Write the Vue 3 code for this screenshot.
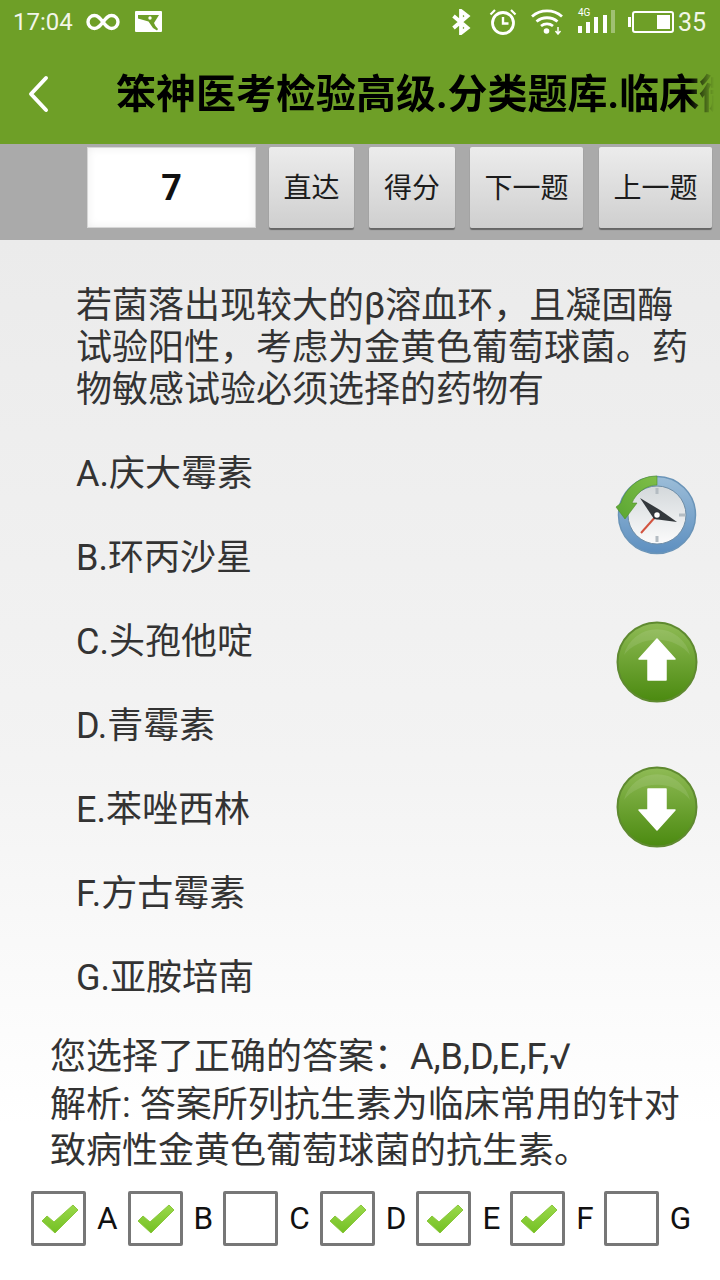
<template>
  <div class="page">
    <div class="status">
      <span class="time">17:04</span>
      <svg class="ic-loop" width="34" height="18" viewBox="0 0 34 18">
        <path d="M17 9c-3-4-5-6.500-8.500-6.500a6.500 6.500 0 0 0 0 13C12 15.500 14 13 17 9c3-4 5-6.500 8.500-6.500a6.500 6.500 0 0 1 0 13C22 15.500 20 13 17 9z" fill="none" stroke="#fff" stroke-width="3.400" />
      </svg>
      <svg class="ic-pic" width="28" height="22" viewBox="0 0 28 22">
        <rect width="27" height="21" rx="1" fill="#fff" />
        <path d="M3 4h21l-5 8 1.500 3 2.500 3-1 1.500-4-2.500-4.500-6.500L3 7.500z" fill="#6e9f27" />
        <circle cx="15" cy="7" r="1.700" fill="#fff" />
      </svg>
      <span class="grow"></span>
      <svg width="20" height="26" viewBox="0 0 20 26" class="ic-bt">
        <path d="M2.500 7l14 12-6.500 5V2l6.500 5-14 12" fill="none" stroke="#fff" stroke-width="3.800" />
      </svg>
      <svg width="28" height="28" viewBox="0 0 28 28" class="ic-alarm">
        <circle cx="14" cy="15" r="10.500" fill="none" stroke="#fff" stroke-width="2.800" />
        <path d="M14 9v6.500h5.500" fill="none" stroke="#fff" stroke-width="2.400" />
        <path d="M1.500 6.500L6 2M26.500 6.500L22 2" stroke="#fff" stroke-width="2.200" />
      </svg>
      <svg width="32" height="26" viewBox="0 0 32 26" class="ic-wifi">
        <path d="M1 7.500c8.500-7.500 21.500-7.500 30 0M5.500 12.500c6-5 15-5 21 0M10 17c3.500-2.800 8.500-2.800 12 0" fill="none" stroke="#fff" stroke-width="2.800" />
        <circle cx="15.500" cy="22" r="2.800" fill="#fff" />
        <path d="M27 18v6M24.500 22l2.500 3 2.500-3" fill="none" stroke="#fff" stroke-width="1.500" />
      </svg>
      <div class="signal">
        <span class="tag">4G</span>
        <svg width="37" height="24" viewBox="0 0 37 24">
          <rect x="0" y="16" width="4" height="7" fill="#fff" />
          <rect x="8" y="12" width="4" height="11" fill="#fff" />
          <rect x="16" y="7" width="4" height="16" fill="#fff" />
          <rect x="25" y="5" width="4" height="18" fill="#fff" />
          <rect x="33" y="0" width="4" height="23" fill="#fff" opacity=".35" />
        </svg>
      </div>
      <div class="battery">
        <span class="nub"></span>
        <span class="cell"><span class="lvl"></span></span>
      </div>
      <span class="pct">35</span>
    </div>

    <header class="head">
      <svg class="back" width="22" height="38" viewBox="0 0 22 38">
        <path d="M19 3L4 19l15 16" fill="none" stroke="#fff" stroke-width="4" stroke-linecap="round" stroke-linejoin="round" />
      </svg>
      <div class="title">笨神医考检验高级.分类题库.临床微生物</div>
    </header>

    <div class="tools">
      <div class="input">7</div>
      <div class="btn b1">直达</div>
      <div class="btn b2">得分</div>
      <div class="btn b3">下一题</div>
      <div class="btn b4">上一题</div>
    </div>

    <main class="body">
      <p class="question">若菌落出现较大的β溶血环，且凝固酶试验阳性，考虑为金黄色葡萄球菌。药物敏感试验必须选择的药物有</p>
      <ul class="options">
        <li v-for="o in options" :key="o">{{ o }}</li>
      </ul>
      <div class="answer">
        <p class="picked">您选择了正确的答案：A,B,D,E,F,√</p>
        <p>解析: 答案所列抗生素为临床常用的针对致病性金黄色葡萄球菌的抗生素。</p>
      </div>
      <div class="checks">
        <div v-for="c in checks" :key="c.k" class="check">
          <span class="box">
            <svg v-if="c.on" width="40" height="32" viewBox="0 0 40 32">
              <defs>
                <linearGradient :id="'tick' + c.k" x1="0" y1="0" x2="0" y2="1">
                  <stop offset="0" stop-color="#9ad94a" />
                  <stop offset="1" stop-color="#74c024" />
                </linearGradient>
              </defs>
              <path d="M2 18l5-5 7 6L33 2l5 5-23 23z" :fill="'url(#tick' + c.k + ')'" stroke="#8ac73c" stroke-width="1" stroke-linejoin="round" />
            </svg>
          </span>
          <span class="letter">{{ c.k }}</span>
        </div>
      </div>

      <svg class="float clock" width="84" height="84" viewBox="0 0 84 84">
        <defs>
          <linearGradient id="ring" x1="0" y1="0" x2="0" y2="1">
            <stop offset="0" stop-color="#9cbdd8" />
            <stop offset="1" stop-color="#5d8fc0" />
          </linearGradient>
          <linearGradient id="face" x1="0" y1="0" x2="0" y2="1">
            <stop offset="0" stop-color="#d3d8db" />
            <stop offset="1" stop-color="#fbfbfb" />
          </linearGradient>
          <linearGradient id="swoosh" x1="0" y1="1" x2="1" y2="0">
            <stop offset="0" stop-color="#5aa632" />
            <stop offset="1" stop-color="#7fbe48" />
          </linearGradient>
        </defs>
        <circle cx="42" cy="42" r="38.500" fill="url(#ring)" stroke="#6a94b8" stroke-width="1.500" />
        <circle cx="42" cy="42" r="29" fill="url(#face)" stroke="#6e8da6" stroke-width="1" />
        <path d="M42 15v6M42 63v6M64 42h6" stroke="#b4bcc2" stroke-width="3" />
        <path d="M42 42L26 60" stroke="#d2533f" stroke-width="2" />
        <path d="M25 25L45 37L62 49L39 46z" fill="#33383c" />
        <circle cx="42" cy="42" r="3.500" fill="#fff" stroke="#30343a" stroke-width="1.500" />
        <path d="M42 3C25 3 11 14 6 30L1 34L10 46L22 30L17 30C21 20 31 12 42 12z" fill="url(#swoosh)" stroke="#4f8f2a" stroke-width=".6" />
      </svg>
      <svg class="float up" width="82" height="82" viewBox="0 0 82 82">
        <defs>
          <linearGradient id="g1" x1="0" y1="0" x2="0" y2="1">
            <stop offset="0" stop-color="#8fbb55" />
            <stop offset="1" stop-color="#4b8a10" />
          </linearGradient>
        </defs>
        <circle cx="41" cy="41" r="39.500" fill="url(#g1)" stroke="#5f8a30" stroke-width="2" />
        <path d="M8 34a34 34 0 0 1 66 0a38 30 0 0 0-66 0z" fill="#fff" opacity=".1" />
        <path d="M41 18L59 38H50V59H32V38H23z" fill="#fff" stroke="#fff" stroke-width="1.500" stroke-linejoin="round" />
      </svg>
      <svg class="float down" width="82" height="82" viewBox="0 0 82 82">
        <circle cx="41" cy="41" r="39.500" fill="url(#g1)" stroke="#5f8a30" stroke-width="2" />
        <path d="M8 34a34 34 0 0 1 66 0a38 30 0 0 0-66 0z" fill="#fff" opacity=".1" />
        <path d="M41 64L59 44H50V23H32V44H23z" fill="#fff" stroke="#fff" stroke-width="1.500" stroke-linejoin="round" />
      </svg>
    </main>
  </div>
</template>

<script setup>
const options = [
  'A.庆大霉素',
  'B.环丙沙星',
  'C.头孢他啶',
  'D.青霉素',
  'E.苯唑西林',
  'F.方古霉素',
  'G.亚胺培南',
]

const checks = [
  { k: 'A', on: true },
  { k: 'B', on: true },
  { k: 'C', on: false },
  { k: 'D', on: true },
  { k: 'E', on: true },
  { k: 'F', on: true },
  { k: 'G', on: false },
]
</script>

<style>
html,
body {
  margin: 0;
  background: #fff;
}
</style>

<style scoped>
.page {
  width: 720px;
  height: 1280px;
  overflow: hidden;
  display: flex;
  flex-direction: column;
  font-family: Roboto, 'Noto Sans CJK SC', sans-serif;
  color: #333;
}
.status {
  height: 44px;
  background: #6e9f27;
  display: flex;
  align-items: center;
  padding: 0 14px 0 13px;
  color: #f2f6e8;
}
.time {
  font-size: 24px;
  width: 59px;
}
.ic-loop {
  margin-left: 14px;
}
.ic-pic {
  margin-left: 15px;
}
.grow {
  flex: 1;
}
.ic-bt {
  margin-right: 18px;
}
.ic-alarm {
  margin-right: 14px;
}
.ic-wifi {
  margin-right: 15px;
}
.signal {
  position: relative;
  width: 37px;
  height: 24px;
  margin-right: 13px;
}
.signal svg {
  display: block;
}
.tag {
  position: absolute;
  left: 0;
  top: -3px;
  font-size: 10px;
  line-height: 12px;
  color: #fff;
}
.battery {
  display: flex;
  align-items: center;
  gap: 1px;
}
.nub {
  width: 3px;
  height: 10px;
  background: #fff;
}
.cell {
  width: 42px;
  height: 22px;
  box-sizing: border-box;
  border: 2px solid #fff;
  border-radius: 3px;
  display: flex;
  justify-content: flex-end;
  padding: 2px;
}
.lvl {
  width: 13px;
  background: #fff;
}
.pct {
  font-size: 25px;
  margin-left: 4px;
}
.head {
  height: 100px;
  background: #6e9f27;
  display: flex;
  align-items: center;
  padding-left: 27px;
  box-sizing: border-box;
}
.back {
  flex: none;
}
.title {
  margin-left: 67px;
  margin-right: 6px;
  padding-bottom: 6px;
  flex: 1;
  overflow: hidden;
  white-space: nowrap;
  font-size: 40px;
  font-weight: 700;
  color: #000;
  -webkit-mask-image: linear-gradient(to right, #000 96%, transparent 100%);
  mask-image: linear-gradient(to right, #000 96%, transparent 100%);
}
.tools {
  height: 96px;
  box-sizing: border-box;
  background: #aaa;
  display: flex;
  padding: 3px 8px 0 87px;
  align-items: flex-start;
}
.input {
  width: 169px;
  height: 81px;
  box-sizing: border-box;
  background: #fff;
  border: 1px solid #d6d6d6;
  box-shadow: inset 0 0 10px rgba(0, 0, 0, 0.07);
  font-size: 36px;
  font-weight: 700;
  color: #111;
  display: flex;
  align-items: center;
  justify-content: center;
}
.btn {
  height: 81px;
  box-sizing: border-box;
  background: linear-gradient(#ececec, #cfcfcf);
  border-radius: 2px;
  box-shadow: 0 2px 1px rgba(0, 0, 0, 0.4);
  font-size: 28px;
  color: #1c1c1c;
  display: flex;
  align-items: center;
  justify-content: center;
  padding-bottom: 3px;
}
.b1 {
  width: 85px;
  margin-left: 13px;
}
.b2 {
  width: 86px;
  margin-left: 15px;
}
.b3 {
  width: 113px;
  margin-left: 15px;
}
.b4 {
  width: 113px;
  margin-left: 16px;
}
.body {
  position: relative;
  flex: 1;
  background: linear-gradient(#ebebeb, #f3f3f3 50%, #fff 85%);
  display: flex;
  flex-direction: column;
}
.question {
  margin: 45px 30px 0 76px;
  font-size: 36px;
  line-height: 42px;
  color: #333;
}
.options {
  list-style: none;
  margin: 21px 0 0 76px;
  padding: 0;
}
.options li {
  height: 84px;
  line-height: 84px;
  font-size: 36px;
  color: #333;
}
.answer {
  margin: 14px 30px 0 50px;
  font-size: 36px;
  line-height: 46px;
  color: #333;
}
.answer p {
  margin: 0;
}
.answer .picked {
  margin-bottom: 2px;
}
.checks {
  display: flex;
  margin: 17px 0 0 31px;
}
.check {
  display: flex;
  align-items: center;
  padding-right: 10px;
}
.box {
  width: 55px;
  height: 55px;
  box-sizing: border-box;
  border: 3px solid #777;
  border-radius: 2px;
  display: flex;
  align-items: center;
  justify-content: center;
  margin-right: 11px;
}
.box svg {
  margin-left: 2px;
}
.letter {
  font-size: 31.500px;
  color: #111;
}
.float {
  position: absolute;
  left: 616px;
}
.clock {
  top: 233px;
  left: 615px;
}
.up {
  top: 381px;
}
.down {
  top: 526px;
}
</style>
